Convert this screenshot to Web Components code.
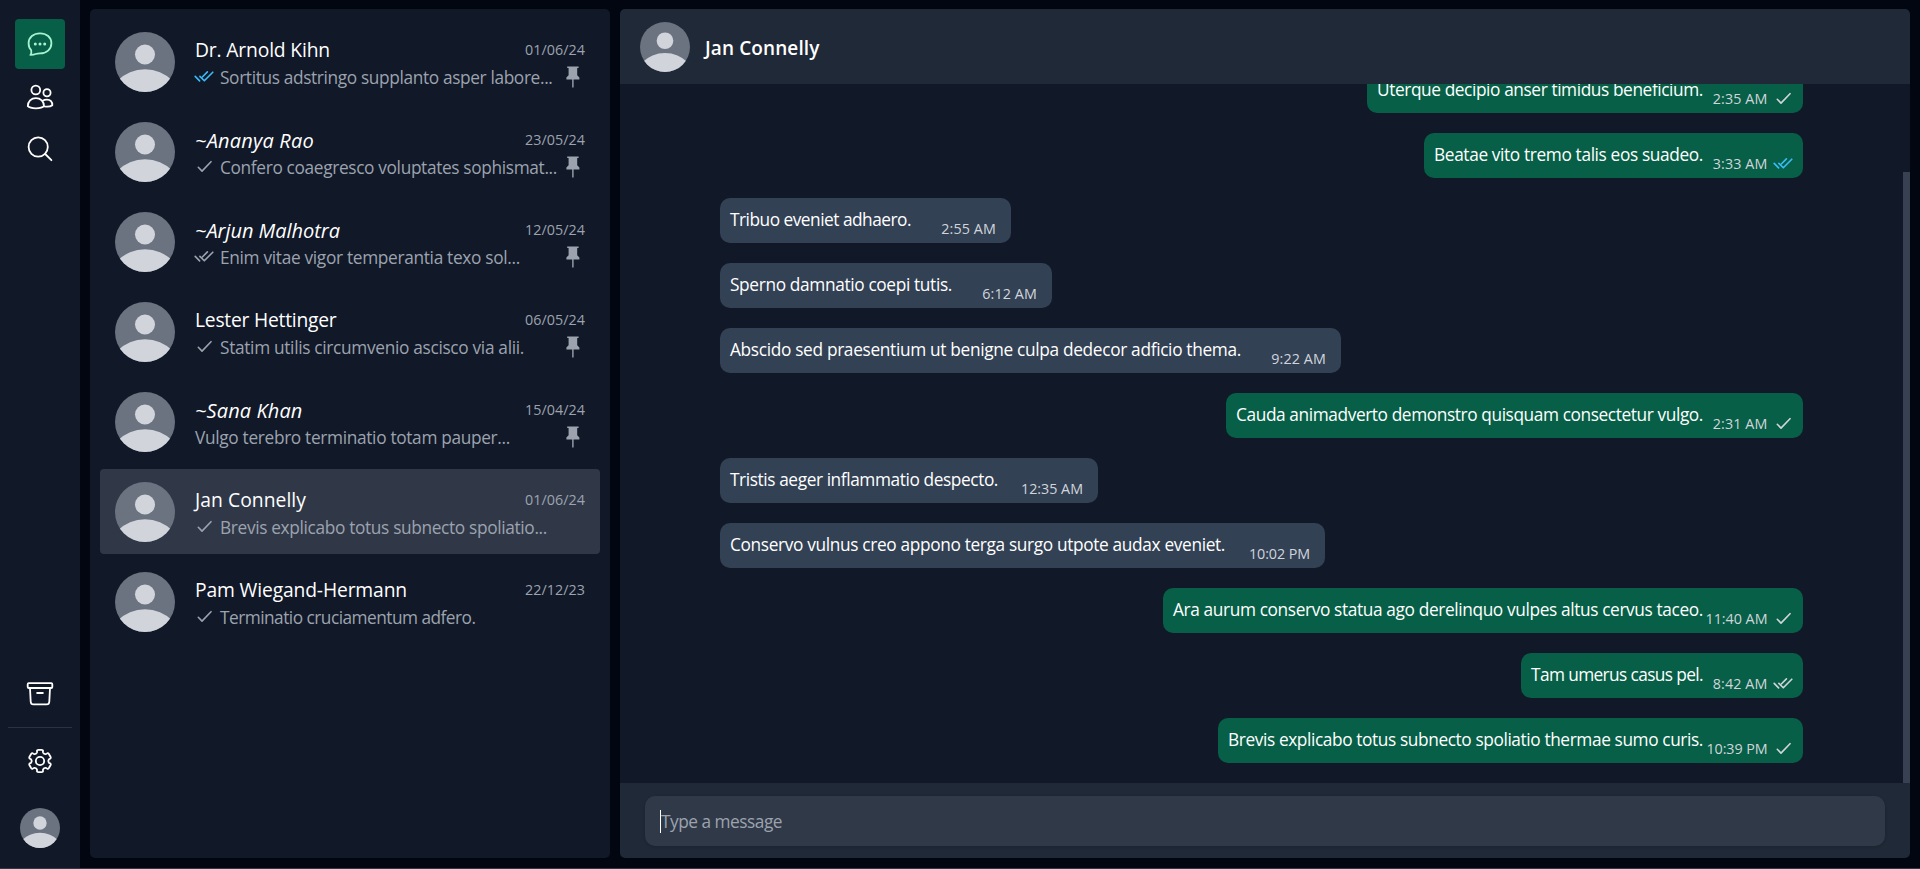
<!DOCTYPE html>
<html lang="en"><head><meta charset="utf-8"><title>Chat</title>
<style>html,body{margin:0;height:100%;overflow:hidden;background:#30384a}</style></head>
<body><chat-app></chat-app>
<script>
function define(name, css, html, ready){
  const t=document.createElement('template');
  customElements.define(name, class extends HTMLElement{
    connectedCallback(){
      if(this.shadowRoot) return;
      t.innerHTML='<style>*{box-sizing:border-box}'+css+'</style>'+(typeof html==='function'?html(this):html);
      this.attachShadow({mode:'open'}).append(t.content.cloneNode(true));
      if(ready) ready(this);
    }
  });
}
// Closed six-tooth outline around (15,15)
function gear(){
  const p=(r,a)=>{a=a*Math.PI/180;return (15+r*Math.cos(a)).toFixed(2)+' '+(15+r*Math.sin(a)).toFixed(2)};
  let d='';
  for(let k=0;k<6;k++){const a=-90+60*k;
    d+=(k?'L':'M')+p(9,a-20)+'Q'+p(9.6,a-17)+' '+p(10.6,a-17)+'Q'+p(11.5,a-15)+' '+p(11.3,a-8)+'L'+p(11.3,a+8)+'Q'+p(11.5,a+15)+' '+p(10.6,a+17)+'Q'+p(9.6,a+17)+' '+p(9,a+20)+'Q'+p(7.8,a+30)+' '+p(9,a+40);}
  return d+'Z';
}
const icons={
 chat:['0 0 30 30','<path d="M6.2 21.2C4.4 19.4 3.6 16.9 3.6 14.2C3.6 8.2 8.5 4.3 15 4.3S26.4 8.2 26.4 14.2S21.5 24.4 15 24.4C13.4 24.4 12 24.6 10.6 25C9.2 25.6 8 25.8 6 25.9H5.4C6.4 24.4 6.6 22.8 6.2 21.2Z"/><g fill="currentColor" stroke="none"><circle cx="10.3" cy="14.9" r="1.5"/><circle cx="15" cy="14.9" r="1.5"/><circle cx="19.7" cy="14.9" r="1.5"/></g>'],
 people:['0 0 30 30','<circle cx="10.8" cy="8" r="4.4"/><circle cx="22" cy="10.7" r="3.6"/><path d="M2.8 24.2C2.8 19.3 6.2 16.1 10.9 16.1S19 19.3 19 24.2C16.4 27 5.4 27 2.8 24.2ZM17.4 18.9C18.8 18 20.3 17.7 22 17.7C25.5 17.7 27.4 19.9 27.3 23.2C25.3 24.8 22.5 25 19.2 24.4"/>'],
 search:['0 0 30 30','<circle cx="13.2" cy="13" r="9.6"/><path d="M20.2 20L26.4 26.2"/>'],
 archive:['0 0 30 30','<rect x="2.7" y="4.2" width="24.6" height="4.8" rx="1.1"/><path d="M5 9.2L5.7 22.7Q5.9 25.4 8.4 25.4H21.6Q24.1 25.4 24.3 22.7L25 9.2M12.1 14H17.9"/>'],
 gear:['0 0 30 30','<path d="'+gear()+'"/><circle cx="15" cy="15" r="4.2"/>'],
 check:['0 0 22 20','<path d="M4.3 10.3L8 14.1L17 4.7"/>'],
 double:['0 0 22 20','<path d="M1.2 9.4L5.6 13.9M5.9 9.4L10.3 13.8L18.8 5.2M8.6 9.8L13.4 4.9"/>'],
 pin:['0 0 14 22','<path fill="currentColor" stroke="none" d="M1.2.4H12.6V2.1H11.2V9.2L13.4 11.5V13.5H7.6V21.6H6.2V13.5H.4V11.5L2.6 9.2V2.1H1.2Z"/>']
};
define('ui-icon',':host{display:block;flex:none;width:30px;height:30px}svg{display:block;width:100%;height:100%;fill:none;stroke:currentColor;stroke-width:var(--stroke,1.6);stroke-linecap:round;stroke-linejoin:round}',
  e=>{const i=icons[e.getAttribute('name')];return `<svg viewBox="${i[0]}">${i[1]}</svg>`});
define('user-avatar',':host{display:block;flex:none;width:var(--size,60px);height:var(--size,60px);border-radius:50%;overflow:hidden;background:#6b7280}svg{display:block;width:100%;height:100%;fill:#d1d5db}',
  '<svg viewBox="0 0 60 60"><circle cx="30" cy="22.5" r="10"/><circle cx="30" cy="76.3" r="39"/></svg>');
// A single line of text tracked to a given measure
define('fit-text',':host{display:block;flex:none;white-space:nowrap}','<span><slot></slot></span>',e=>{
  const w=+e.getAttribute('w'),n=e.textContent.length;
  const cur=e.shadowRoot.querySelector('span').getBoundingClientRect().width;
  e.style.letterSpacing=((w-cur)/n).toFixed(4)+'px';
  e.style.width=w+'px';
});
define('nav-button',':host{display:flex;flex:none;width:50px;height:50px;align-items:center;justify-content:center;border-radius:4px;color:#fff;--stroke:1.8}:host([active]){background:#065f46;color:#a7f3d0}',
  e=>`<ui-icon name="${e.getAttribute('icon')}"></ui-icon>`);
define('side-nav',':host{display:flex;flex-direction:column;align-items:center;width:80px;height:100%;background:#111827;padding:19px 0 20px}nav{display:flex;flex-direction:column;gap:2.5px}.space{flex:1}hr{width:64px;height:1px;border:0;background:#2b3341;margin:8px 0}user-avatar{--size:40px;margin-top:22px}',
  '<nav><nav-button icon="chat" active></nav-button><nav-button icon="people"></nav-button><nav-button icon="search"></nav-button></nav><div class="space"></div><nav-button icon="archive"></nav-button><hr><nav-button icon="gear"></nav-button><user-avatar></user-avatar>');
define('chat-row',`:host{display:flex;height:85px;padding:0 15px;border-radius:4px;gap:20px;color:#9ca3af}
:host([selected]){background:#303848}user-avatar{margin-top:12.6px}.info{flex:1;min-width:0;padding-top:16.5px}
.top,.bottom{display:flex;align-items:center}.top{height:28px;justify-content:space-between}.bottom{height:27px}
.name{font-size:19.3px;font-weight:500;color:#fff}.name.it{font-style:italic;font-size:20px;padding-top:1px}.date{font-size:14.3px}.msg{font-size:17.3px;padding-top:1px}
.bottom ui-icon{width:22px;height:20px;margin-left:-.7px;margin-right:3.7px}.bottom .pin{width:14px;height:22px;margin:-1px 5.5px 0 auto}.blue{color:#38bdf8}`,
 e=>{const a=k=>e.getAttribute(k);return `<user-avatar></user-avatar><div class="info"><div class="top"><fit-text class="name ${e.hasAttribute('guest')?'it':''}" w="${a('nw')}">${a('name')}</fit-text><fit-text class="date" w="60">${a('date')}</fit-text></div><div class="bottom">${a('status')?`<ui-icon class="${e.hasAttribute('read')?'blue':''}" name="${a('status')}"></ui-icon>`:''}<fit-text class="msg" w="${a('mw')}">${e.textContent}</fit-text>${e.hasAttribute('pinned')?'<ui-icon class="pin" name="pin"></ui-icon>':''}</div></div>`});
define('chat-list',':host{display:flex;flex-direction:column;gap:5px;width:520px;background:#111827;border-radius:5px;padding:10px}',`
<chat-row name="Dr. Arnold Kihn" nw="135" date="01/06/24" status="double" read mw="332.5" pinned>Sortitus adstringo supplanto asper labore...</chat-row>
<chat-row name="~Ananya Rao" guest nw="119" date="23/05/24" status="check" mw="337" pinned>Confero coaegresco voluptates sophismat...</chat-row>
<chat-row name="~Arjun Malhotra" guest nw="145" date="12/05/24" status="double" mw="300" pinned>Enim vitae vigor temperantia texo sol...</chat-row>
<chat-row name="Lester Hettinger" nw="141.5" date="06/05/24" status="check" mw="304" pinned>Statim utilis circumvenio ascisco via alii.</chat-row>
<chat-row name="~Sana Khan" guest nw="107.5" date="15/04/24" mw="315" pinned>Vulgo terebro terminatio totam pauper...</chat-row>
<chat-row name="Jan Connelly" nw="111" date="01/06/24" status="check" mw="327" selected>Brevis explicabo totus subnecto spoliatio...</chat-row>
<chat-row name="Pam Wiegand-Hermann" nw="212" date="22/12/23" status="check" mw="255.5">Terminatio cruciamentum adfero.</chat-row>`);
define('chat-message',`:host{display:flex;flex:none;align-self:flex-start;height:45px;padding-left:10px;border-radius:10px;background:#334155;color:#fff}
:host([out]){align-self:flex-end;background:#065f46}.text{font-size:17.3px;line-height:44px}
.meta{width:100px;display:flex;justify-content:flex-end;align-items:center;align-self:flex-end;height:29px;padding-right:15px;font-size:14.3px;color:#d1d5db}
:host([out]) .meta{padding-right:8.5px}ui-icon{width:22px;height:20px;margin-left:5px}.blue{color:#38bdf8}`,
 e=>{const a=k=>e.getAttribute(k);return `<fit-text class="text" w="${a('w')}">${e.textContent}</fit-text><div class="meta"><fit-text w="${a('tw')||54.7}">${a('time')}</fit-text>${a('status')?`<ui-icon class="${e.hasAttribute('read')?'blue':''}" name="${a('status')}"></ui-icon>`:''}</div>`});
define('message-log',':host{display:flex;flex:1;min-height:0;overflow:hidden;background:#111827}.log{flex:1;display:flex;flex-direction:column;justify-content:flex-end;gap:20px;padding:0 100px 20px}.track{width:7px;padding-top:88px}.thumb{height:100%;background:#374151}',`
<div class="log">
<chat-message out w="326" time="2:35 AM" status="check">Uterque decipio anser timidus beneficium.</chat-message>
<chat-message out w="269" time="3:33 AM" status="double" read>Beatae vito tremo talis eos suadeo.</chat-message>
<chat-message w="181" time="2:55 AM">Tribuo eveniet adhaero.</chat-message>
<chat-message w="222" time="6:12 AM">Sperno damnatio coepi tutis.</chat-message>
<chat-message w="511" time="9:22 AM">Abscido sed praesentium ut benigne culpa dedecor adficio thema.</chat-message>
<chat-message out w="467" time="2:31 AM" status="check">Cauda animadverto demonstro quisquam consectetur vulgo.</chat-message>
<chat-message w="268" time="12:35 AM" tw="62">Tristis aeger inflammatio despecto.</chat-message>
<chat-message w="495" time="10:02 PM" tw="61">Conservo vulnus creo appono terga surgo utpote audax eveniet.</chat-message>
<chat-message out w="530" time="11:40 AM" tw="62" status="check">Ara aurum conservo statua ago derelinquo vulpes altus cervus taceo.</chat-message>
<chat-message out w="172" time="8:42 AM" status="double">Tam umerus casus pel.</chat-message>
<chat-message out w="475" time="10:39 PM" tw="61" status="check">Brevis explicabo totus subnecto spoliatio thermae sumo curis.</chat-message>
</div><div class="track"><div class="thumb"></div></div>`);
define('message-input',':host{display:flex;align-items:center;height:50px;padding:0 15px;border-radius:10px;background:#303947;color:#9ca3af;font-size:17.3px;box-shadow:0 1px 3px rgba(0,0,0,.15)}i{width:1px;height:23px;background:#fff}fit-text{padding-top:1px}',
 '<i></i><fit-text w="121">Type a message</fit-text>');
define('chat-window',':host{display:flex;flex-direction:column;flex:1;min-width:0;border-radius:5px;overflow:hidden;background:#1f2937}header{display:flex;align-items:center;gap:15px;height:75px;padding:0 20px;color:#fff;font-size:19px;font-weight:600}header user-avatar{--size:50px}header fit-text{line-height:26px;padding-top:2px}footer{height:75px;padding:13px 25px 12px}',
 '<header><user-avatar></user-avatar><fit-text w="114.5">Jan Connelly</fit-text></header><message-log></message-log><footer><message-input></message-input></footer>');
define('chat-app',':host{display:flex;height:868px;background:#020610;font-family:"Open Sans","Noto Sans",sans-serif;font-size:17px}main{flex:1;display:flex;gap:10px;padding:9px 10px 10px}',
 '<side-nav></side-nav><main><chat-list></chat-list><chat-window></chat-window></main>');
</script></body></html>
